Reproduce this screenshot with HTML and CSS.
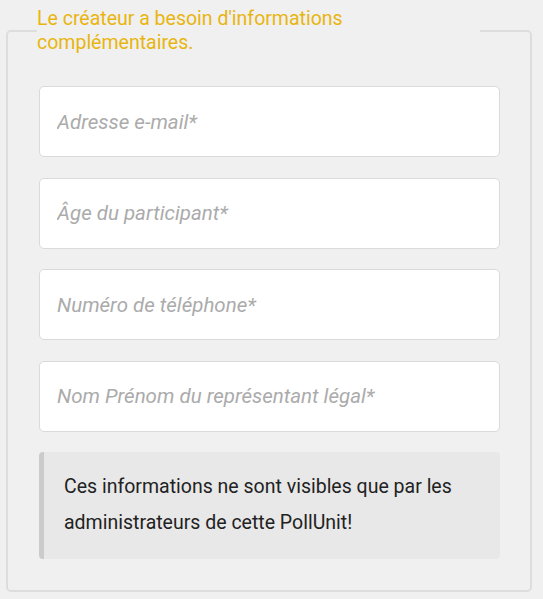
FILE: index.html
```html
<!DOCTYPE html>
<html lang="fr">
<head>
<meta charset="utf-8">
<link rel="stylesheet" href="styles.css">
</head>
<body>
<form class="form">
  <fieldset class="box">
    <legend class="box-title">Le créateur a besoin d'informations complémentaires.</legend>
    <div class="fields">
      <input class="field" type="text" placeholder="Adresse e-mail*">
      <input class="field" type="text" placeholder="Âge du participant*">
      <input class="field" type="text" placeholder="Numéro de téléphone*">
      <input class="field" type="text" placeholder="Nom Prénom du représentant légal*">
      <div class="note">Ces informations ne sont visibles que par les administrateurs de cette PollUnit!</div>
    </div>
  </fieldset>
</form>
</body>
</html>
```
FILE: styles.css
```css
html, body {
  margin: 0;
  background: #f0f0f0;
}
body {
  padding: 7px 11px 0 6px;
  font-family: Roboto, "Liberation Sans", sans-serif;
}
.box {
  margin: 0;
  border: 2px solid #dddddd;
  border-radius: 5px;
  padding: 31px 30px 31px 31px;
  min-width: 0;
}
.box-title {
  max-width: 443px;
  padding: 0;
  margin-left: -2px;
  color: #e8b511;
  font-size: 19.5px;
  line-height: 24px;
}
.fields {
  display: flex;
  flex-direction: column;
  gap: 20.5px;
}
.field {
  box-sizing: border-box;
  height: 71px;
  margin: 0;
  border: 1px solid #dadada;
  border-radius: 5px;
  background: #fff;
  padding: 0 17px;
  font-family: inherit;
  font-size: 20.5px;
  outline: none;
}
.field::placeholder {
  color: #ababab;
  font-style: italic;
}
.note {
  margin-top: 0;
  background: #e8e8e8;
  border-left: 5px solid #cbcbcb;
  border-radius: 4px;
  padding: 17px 20px 18px 20px;
  color: #222;
  font-size: 19.5px;
  line-height: 36px;
}
```
